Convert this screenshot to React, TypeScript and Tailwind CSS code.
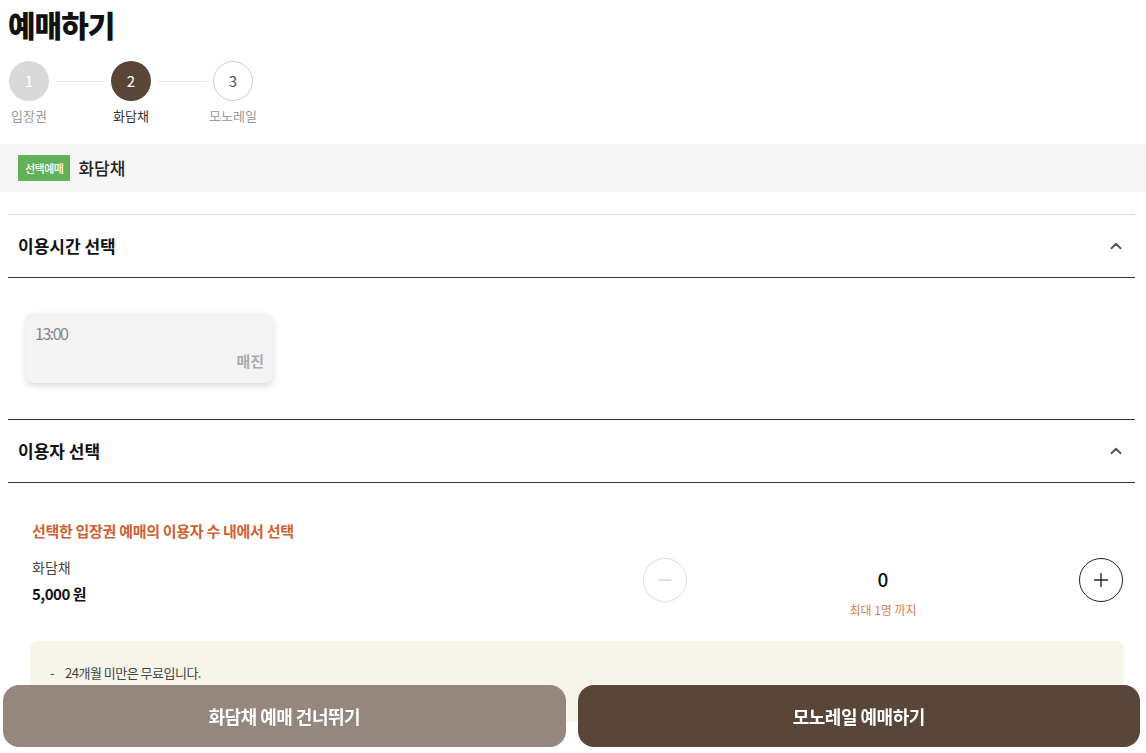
import { ChevronUp, Minus, Plus } from "lucide-react"

const font = { fontFamily: '"Noto Sans CJK KR", "Noto Sans", sans-serif' }

function Step({ n, label, state }: { n: number; label: string; state: "done" | "active" | "todo" }) {
  const circle =
    state === "done"
      ? "bg-[#d9d9d9] text-white"
      : state === "active"
        ? "bg-[#5a4637] text-white"
        : "bg-white border border-[#cfcfcf] text-[#555]"
  return (
    <div className="flex flex-col items-center w-[40px]">
      <div className={`w-[40px] h-[40px] rounded-full flex items-center justify-center text-[15px] ${circle}`}>{n}</div>
      <div className={`mt-[5px] text-[13px] whitespace-nowrap leading-[20px] ${state === "active" ? "text-[#333]" : "text-[#999]"}`}>
        {label}
      </div>
    </div>
  )
}

function SectionHeader({ title, top }: { title: string; top: string }) {
  return (
    <div className={`ml-2 mr-[11px] border-t ${top} border-b border-b-[#333] h-[64px] flex items-center justify-between pl-[10px] pr-[10px]`}>
      <h3 className="text-[17px] font-bold text-[#111]">{title}</h3>
      <ChevronUp className="w-[18px] h-[18px] text-[#555]" strokeWidth={2.5} />
    </div>
  )
}

export default function App() {
  return (
    <div className="relative min-h-[753px] bg-white pb-[80px]" style={font}>
      <h1 className="pl-[8px] pt-[2px] text-[30px] leading-[44px] font-black tracking-[-1px] text-[#111]">예매하기</h1>
      <div className="flex items-start pl-[9px] mt-[15px]">
        <Step n={1} label="입장권" state="done" />
        <div className="w-[48px] h-px bg-[#e3e3e3] mt-[20px] mx-[7px]" />
        <Step n={2} label="화담채" state="active" />
        <div className="w-[48px] h-px bg-[#e3e3e3] mt-[20px] mx-[7px]" />
        <Step n={3} label="모노레일" state="todo" />
      </div>

      <div className="mt-[18px] h-[48px] bg-[#f6f6f6] flex items-center pl-[18px] gap-2">
        <span className="bg-[#62b159] text-white text-[11px] font-medium h-[26px] px-[7px] flex items-center tracking-[-0.5px]">선택예매</span>
        <span className="text-[17px] font-medium text-[#222]">화담채</span>
      </div>

      <div className="mt-[22px]">
        <SectionHeader title="이용시간 선택" top="border-t-[#dcdcdc]" />
      </div>

      <div className="px-[26px] pt-[35px] pb-[36px]">
        <div className="w-[247px] h-[70px] bg-[#f3f3f3] rounded-[8px] shadow-[0_3px_6px_rgba(0,0,0,0.15)] px-[9px] pt-[8px] flex flex-col">
          <span className="text-[16px] text-[#888] tracking-[-1.5px]">13:00</span>
          <span className="self-end text-[15px] font-bold text-[#aaa] mt-[5px]">매진</span>
        </div>
      </div>

      <SectionHeader title="이용자 선택" top="border-t-[#333]" />

      <div className="pl-[32px] pr-[23px] pt-[37px]">
        <p className="text-[15px] font-bold text-[#d0602f] tracking-[-0.3px]">선택한 입장권 예매의 이용자 수 내에서 선택</p>
        <div className="flex items-start justify-between mt-[12px]">
          <div>
            <div className="text-[14px] text-[#444] leading-[24px]">화담채</div>
            <div className="text-[15px] font-bold text-[#111] tracking-[-0.5px] leading-[30px]">5,000 원</div>
          </div>
          <div className="w-[480px] flex items-start justify-between mt-[3px]">
            <button className="w-[44px] h-[44px] rounded-full border border-[#dcdcdc] flex items-center justify-center text-[#cfcfcf]">
              <Minus className="w-[20px] h-[20px]" strokeWidth={1.5} />
            </button>
            <div className="flex flex-col items-center">
              <span className="text-[19px] font-medium text-[#111] leading-[30px] mt-[6px]">0</span>
              <span className="text-[12px] text-[#d9824e] mt-[7px]">최대 1명 까지</span>
            </div>
            <button className="w-[44px] h-[44px] rounded-full border border-[#222] flex items-center justify-center text-[#222]">
              <Plus className="w-[22px] h-[22px]" strokeWidth={1.5} />
            </button>
          </div>
        </div>
      </div>

      <div className="ml-[30px] mr-[22px] mt-[22px] bg-[#f7f4e9] rounded-[8px] px-[20px] pt-[22px] pb-[40px]">
        <p className="text-[13px] text-[#444] tracking-[-0.5px] flex">
          <span className="w-[15px]">-</span>
          <span>24개월 미만은 무료입니다.</span>
        </p>
      </div>

      <div className="fixed bottom-[6px] left-[3px] right-[6px] flex gap-[12px]">
        <button className="flex-1 h-[62px] rounded-[16px] bg-[#95877d] text-white text-[18px] font-bold tracking-[-0.5px]">화담채 예매 건너뛰기</button>
        <button className="flex-1 h-[62px] rounded-[16px] bg-[#5a4638] text-white text-[18px] font-bold tracking-[-0.5px]">모노레일 예매하기</button>
      </div>
    </div>
  )
}
